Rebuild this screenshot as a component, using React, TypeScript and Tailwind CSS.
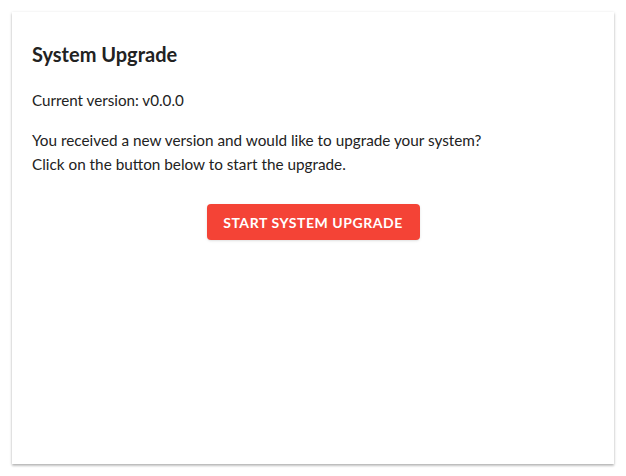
export default function App() {
  return (
    <div className="h-[476px] w-[626px] bg-white p-3">
      <div className="flex h-full flex-col bg-white px-5 pt-[30px] text-[#222] shadow-[0_1px_3px_rgba(0,0,0,0.2),0_2px_2px_rgba(0,0,0,0.14),0_1px_1px_-1px_rgba(0,0,0,0.12)] font-['Lato',sans-serif]">
        <h2 className="text-[20px] font-bold leading-[24px]">System Upgrade</h2>
        <p className="mt-[22px] text-[15.2px] leading-[24px]">Current version: v0.0.0</p>
        <p className="mt-[16px] text-[15.3px] leading-[24px]">
          You received a new version and would like to upgrade your system?
          <br />
          Click on the button below to start the upgrade.
        </p>
        <div className="mt-[28px] flex justify-center">
          <button className="h-9 w-[213px] rounded bg-[#f44336] text-[14px] font-bold tracking-[0.04em] text-white shadow-sm">
            START SYSTEM UPGRADE
          </button>
        </div>
      </div>
    </div>
  );
}
